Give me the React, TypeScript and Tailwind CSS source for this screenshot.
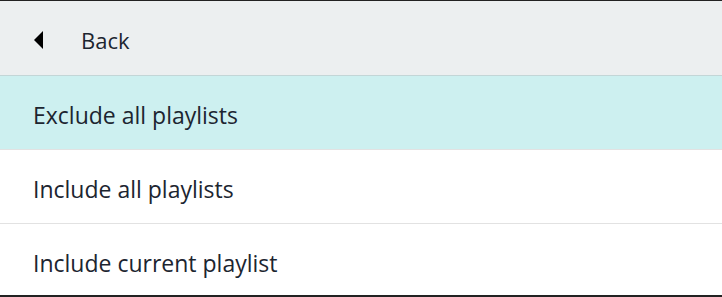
import React from 'react';

const items = [
  { label: 'Exclude all playlists', active: true },
  { label: 'Include all playlists', active: false },
  { label: 'Include current playlist', active: false },
];

export default function App() {
  return (
    <div
      className="w-[722px] h-[297px] overflow-hidden bg-white border-t border-b-2 border-[#222] text-[#1c2530]"
      style={{ fontFamily: '"Open Sans", "Noto Sans", sans-serif' }}
    >
      <div className="h-[75px] flex items-center bg-[#eceff0] border-b border-[#c3d6d7]">
        <span className="ml-[34px] mt-[3px] w-0 h-0 border-y-[9px] border-y-transparent border-r-[9px] border-r-black" />
        <span className="ml-[38px] pt-[5px] text-[22px]">Back</span>
      </div>
      {items.map((item) => (
        <div
          key={item.label}
          className={
            'h-[74px] flex items-center pl-[33px] pt-[5px] text-[23px] border-b border-[#e2e2e2] last:border-b-0 ' +
            (item.active ? 'bg-[#cdf0f0]' : 'bg-white')
          }
        >
          {item.label}
        </div>
      ))}
    </div>
  );
}
